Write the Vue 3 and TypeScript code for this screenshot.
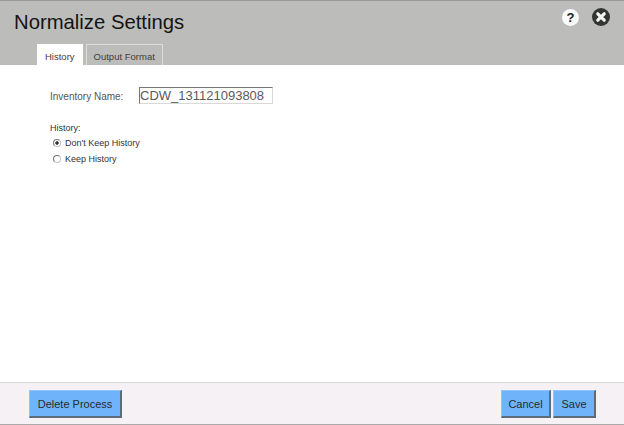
<script setup lang="ts">
const tabs: { label: string; active: boolean }[] = [
  { label: 'History', active: true },
  { label: 'Output Format', active: false },
]
</script>

<template>
  <div class="dialog">
    <header class="head">
      <div class="title-row">
        <h1 class="title">Normalize Settings</h1>
        <div class="icons">
          <svg class="help" width="17" height="17" viewBox="0 0 17 17">
            <circle cx="8.5" cy="8.5" r="8.5" fill="#fafafa" />
            <text x="8.5" y="13" text-anchor="middle" class="q">?</text>
          </svg>
          <svg width="18" height="18" viewBox="0 0 18 18">
            <circle cx="9" cy="9" r="9" fill="#333532" />
            <path d="M5.8 5.8l6.4 6.4M12.2 5.8l-6.4 6.4" stroke="#f4f4f4" stroke-width="3.2" stroke-linecap="round" />
          </svg>
        </div>
      </div>
      <nav class="tabs">
        <div v-for="t in tabs" :key="t.label" class="tab" :class="{ active: t.active }">{{ t.label }}</div>
      </nav>
    </header>
    <main class="body">
      <div class="name-row">
        <label class="name-label">Inventory Name:</label>
        <input class="name-input" value="CDW_131121093808" />
      </div>
      <div class="hist-label">History:</div>
      <label class="radio-row first">
        <input type="radio" name="hist" class="radio" checked />
        <span>Don't Keep History</span>
      </label>
      <label class="radio-row second">
        <input type="radio" name="hist" class="radio" />
        <span>Keep History</span>
      </label>
    </main>
    <footer class="foot">
      <button class="btn delete">Delete Process</button>
      <div class="right">
        <button class="btn cancel">Cancel</button>
        <button class="btn save">Save</button>
      </div>
    </footer>
  </div>
</template>

<style>
html, body { margin: 0; background: #fff; }
</style>

<style scoped>
.dialog {
  width: 624px;
  height: 425px;
  display: flex;
  flex-direction: column;
  font-family: "Liberation Sans", Arial, sans-serif;
  background: #fff;
  overflow: hidden;
}
.head {
  height: 65px;
  box-sizing: border-box;
  background: #bcbdbb;
  border-top: 1px solid #989898;
  display: flex;
  flex-direction: column;
  justify-content: space-between;
}
.title-row {
  display: flex;
  justify-content: space-between;
  align-items: flex-start;
  padding: 7px 14px 0 14px;
}
.title {
  margin: 0;
  font-size: 20.3px;
  font-weight: 400;
  line-height: 28px;
  color: #141414;
}
.icons {
  display: flex;
  gap: 13px;
}
.help {
  margin-top: 1px;
}
.q {
  font: 700 13px "Liberation Sans", sans-serif;
  fill: #222;
}
.tabs {
  display: flex;
  gap: 3px;
  padding-left: 37px;
}
.tab {
  height: 21px;
  line-height: 23px;
  padding: 0 7px;
  font-size: 9.5px;
  color: #4a3a34;
  box-sizing: border-box;
  border: 1px solid #dcdcdc;
  border-bottom: none;
}
.tab.active {
  background: #fff;
  border-color: #fff;
}
.body {
  flex: 1;
  padding: 0 50px;
  font-size: 9px;
  color: #444;
}
.name-row {
  display: flex;
  align-items: center;
  margin-top: 22px;
}
.name-label {
  width: 89px;
  color: #555;
  font-size: 10px;
  padding-top: 1px;
}
.name-input {
  width: 134px;
  height: 17px;
  box-sizing: border-box;
  padding: 0;
  font: 13px "Liberation Sans", sans-serif;
  color: #5a5a5a;
  border: 1px solid #d8d8d8;
  border-top-color: #777;
  border-left-color: #777;
  background: #fff;
  border-radius: 0;
  outline: none;
}
.hist-label {
  margin-top: 18px;
  line-height: 12px;
  color: #333;
}
.radio-row {
  display: flex;
  align-items: center;
  gap: 4px;
  padding-left: 3px;
  height: 12px;
  color: #333;
}
.radio-row.first {
  margin-top: 3px;
}
.radio-row.second {
  margin-top: 4px;
}
.radio {
  appearance: none;
  margin: 0;
  width: 8px;
  height: 8px;
  box-sizing: border-box;
  border: 1px solid;
  border-color: #777 #c4c4c4 #c4c4c4 #777;
  border-radius: 50%;
  background: #fff;
}
.radio:checked {
  background: radial-gradient(circle, #333 1.4px, #fff 2px);
}
.foot {
  height: 43px;
  box-sizing: border-box;
  background: #f6f1f5;
  border-top: 1px solid #d8d8d8;
  border-bottom: 1px solid #aaa;
  display: flex;
  justify-content: space-between;
  align-items: flex-start;
  padding: 7px 28px 0 29px;
}
.right {
  display: flex;
  gap: 2px;
}
.btn {
  height: 28px;
  box-sizing: border-box;
  background: #6fb4fb;
  border: 1px solid;
  border-color: #8fc4fc #5d6b78 #5d6b78 #8fc4fc;
  border-width: 1px 2px 2px 1px;
  font: 11px "Liberation Sans", sans-serif;
  color: #2a2a2a;
  padding: 0;
}
.delete { width: 93px; }
.cancel { width: 50px; }
.save { width: 43px; }
</style>
